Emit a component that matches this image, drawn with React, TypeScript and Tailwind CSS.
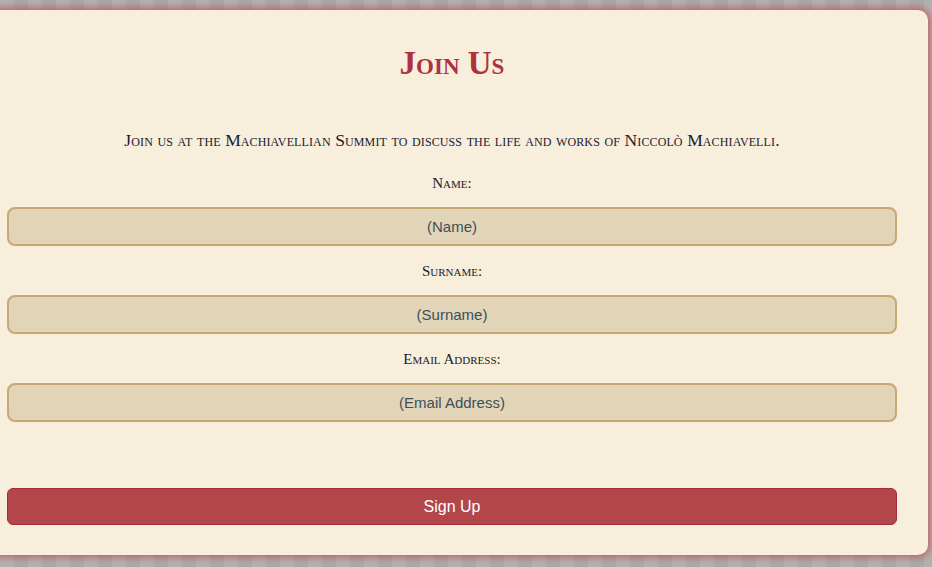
import React from 'react';

const Field = ({ label, placeholder }: { label: string; placeholder: string }) => {
  return (
    <div className="flex flex-col">
      <label className="h-[24px] text-center font-['Liberation_Serif',serif] text-[15px] leading-[24px] text-[#1b1b2f] [font-variant:small-caps]">
        {label}
      </label>
      <input
        type="text"
        placeholder={placeholder}
        className="mt-[12px] h-[39px] w-full rounded-[8px] border-2 border-[#c7a873] bg-[#e2d4b6] text-center font-['Liberation_Sans',Arial,sans-serif] text-[15px] text-[#3c4e5e] outline-none placeholder:text-[#3c4e5e]"
      />
    </div>
  );
};

const App = () => {
  return (
    <div className="h-[567px] w-[932px] overflow-hidden bg-[repeating-linear-gradient(90deg,#b1b1b1_0px,#b1b1b1_14px,#a9a9a9_14px,#a9a9a9_28px)] pt-[10px]">
      <div className="-ml-[24px] h-[545px] w-[952px] rounded-[10px] bg-[#f7eedc] px-[31px] shadow-[0_0_7px_2px_rgba(196,70,70,0.75)]">
        <h2 className="h-[74px] pt-[32px] text-center font-['Liberation_Serif',serif] text-[33px] font-bold leading-[42px] text-[#b0313d] [font-variant:small-caps]">
          Join Us
        </h2>
        <p className="mt-[44px] h-[24px] text-center font-['Liberation_Serif',serif] text-[17.5px] leading-[24px] tracking-[0.12px] text-[#1b1b2f] [font-variant:small-caps]">
          Join us at the Machiavellian Summit to discuss the life and works of Niccolò Machiavelli.
        </p>
        <form className="mt-[19px] flex flex-col gap-[13px]">
          <Field label="Name:" placeholder="(Name)" />
          <Field label="Surname:" placeholder="(Surname)" />
          <Field label="Email Address:" placeholder="(Email Address)" />
          <button
            type="submit"
            className="mt-[53px] h-[37px] w-full rounded-[6px] border border-[#a52b37] bg-[#b2464a] font-['Liberation_Sans',Arial,sans-serif] text-[16px] text-white"
          >
            Sign Up
          </button>
        </form>
      </div>
    </div>
  );
};

export default App;
